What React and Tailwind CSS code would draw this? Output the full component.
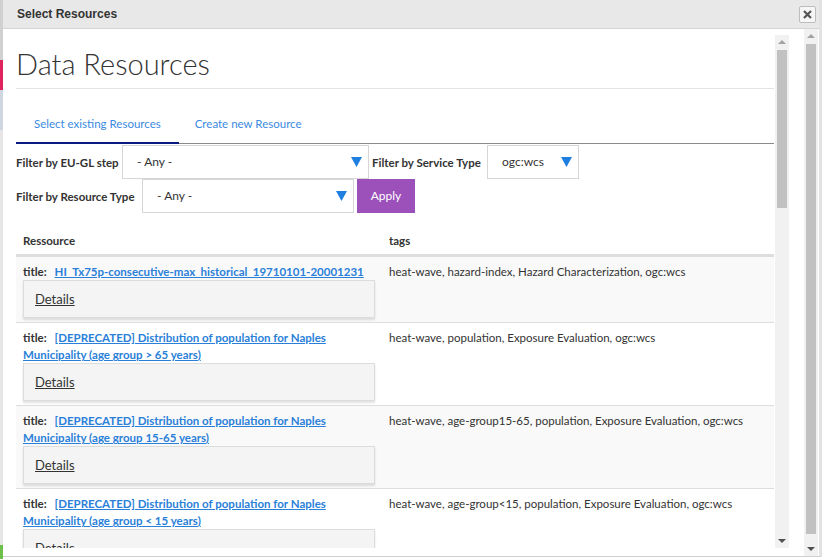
import React from "react";

const rows = [
  {
    title: "HI_Tx75p-consecutive-max_historical_19710101-20001231",
    tags: "heat-wave, hazard-index, Hazard Characterization, ogc:wcs",
    stripe: true,
  },
  {
    title: "[DEPRECATED] Distribution of population for Naples Municipality (age group > 65 years)",
    tags: "heat-wave, population, Exposure Evaluation, ogc:wcs",
    stripe: false,
  },
  {
    title: "[DEPRECATED] Distribution of population for Naples Municipality (age group 15-65 years)",
    tags: "heat-wave, age-group15-65, population, Exposure Evaluation, ogc:wcs",
    stripe: true,
  },
  {
    title: "[DEPRECATED] Distribution of population for Naples Municipality (age group < 15 years)",
    tags: "heat-wave, age-group<15, population, Exposure Evaluation, ogc:wcs",
    stripe: false,
  },
];

const Caret = () => (
  <svg width="11" height="10" viewBox="0 0 11 10" className="shrink-0">
    <path d="M0 0 H11 L5.5 10 Z" fill="#1f7fe0" />
  </svg>
);

const Select = ({ value, width }) => (
  <div
    className={`flex h-[34px] items-center justify-between border border-[#d6d6d6] bg-white pl-[14px] pr-[6px] text-[12px] font-normal text-[#333] ${width}`}
  >
    <span>{value}</span>
    <Caret />
  </div>
);

// fake scrollbar, the picture shows two of them
const ScrollBar = ({ thumbTop, thumbHeight, className }) => (
  <div className={`relative flex w-[14px] flex-col bg-[#f1f1f1] ${className}`}>
    <div className="flex h-[14px] items-center justify-center">
      <div className="h-0 w-0 border-x-[4px] border-b-[4px] border-x-transparent border-b-[#a3a3a3]" />
    </div>
    <div
      className="absolute left-[2px] right-[2px] bg-[#c1c1c1]"
      style={{ top: thumbTop, height: thumbHeight }}
    />
    <div className="flex-1" />
    <div className="flex h-[14px] items-center justify-center">
      <div className="h-0 w-0 border-x-[4px] border-t-[4px] border-x-transparent border-t-[#505050]" />
    </div>
  </div>
);

const ResourceRow = ({ row }) => (
  <div
    className={`flex border-t border-[#dddddd] ${row.stripe ? "bg-[#f9f9f9]" : "bg-white"}`}
  >
    <div className="w-[366px] shrink-0 px-[7px] pb-[4px] pt-[6px]">
      <div className="text-[11.5px] leading-[17px] text-[#333]">
        <span className="font-bold">title:</span>{" "}
        <a href="#" className="ml-[5px] font-bold text-[#2a7fd9] underline">
          {row.title}
        </a>
      </div>
      <div className="flex h-[38px] items-center border border-[#dcdcdc] bg-[#f4f4f4] px-[11px] shadow-[0_2px_2px_rgba(0,0,0,0.12)]">
        <span className="text-[13px] text-[#333] underline">Details</span>
      </div>
    </div>
    <div className="flex-1 px-[7px] pt-[6px] text-[11.5px] leading-[17px] text-[#333]">
      {row.tags}
    </div>
  </div>
);

export default function App() {
  return (
    <div className="flex h-[559px] w-[822px] overflow-hidden bg-white font-['Lato',sans-serif]">
      {/* page behind the dialog */}
      <div className="flex w-[3px] shrink-0 flex-col bg-[#e6e6e6]">
        <div className="h-[60px] bg-[#d0d0d0]" />
        <div className="h-[30px] bg-[#e0245e]" />
        <div className="h-[40px] bg-[#d0d6e0]" />
        <div className="flex-1" />
        <div className="h-[14px] bg-[#6cc04a]" />
      </div>

      <div className="flex h-[557px] flex-1 flex-col border-r-[3px] border-b border-[#cfcfcf] border-r-[#e2e2e2]">
        {/* title bar */}
        <div className="flex h-[29px] shrink-0 items-center justify-between border-b border-[#d4d4d4] bg-[#e8e8e8] pl-[14px] pr-[3px]">
          <span className="font-['Liberation_Sans',Arial,sans-serif] text-[12px] font-bold text-[#333]">
            Select Resources
          </span>
          <button className="flex h-[17px] w-[17px] items-center justify-center rounded-[2px] border border-[#bdbdbd] bg-[#f6f6f6]">
            <svg width="9" height="9" viewBox="0 0 9 9">
              <path d="M1 1 L8 8 M8 1 L1 8" stroke="#555" strokeWidth="2.2" />
            </svg>
          </button>
        </div>

        {/* body */}
        <div className="flex flex-1">
          <div className="flex flex-1 pl-[13px] pt-[6px]">
            <div className="flex h-[513px] w-[773px]">
              <div className="w-[759px] overflow-hidden">
                <h1 className="mt-[11px] text-[29px] font-light leading-[36px] text-[#333]">
                  Data Resources
                </h1>
                <div className="mt-[6px] h-px bg-[#e3e3e3]" />

                {/* tabs */}
                <div className="mt-[26px] flex border-b border-[#8a8a8a]">
                  <div className="-mb-px border-b-2 border-[#0a1a80] px-[18px] pb-[10px] text-[11.5px] text-[#3b8ae0]">
                    Select existing Resources
                  </div>
                  <div className="px-[16px] pb-[10px] text-[11.5px] text-[#3b8ae0]">
                    Create new Resource
                  </div>
                </div>

                {/* filters */}
                <div className="mt-px flex items-center text-[11.5px] font-bold text-[#333]">
                  <span className="w-[106px]">Filter by EU-GL step</span>
                  <Select value="- Any -" width="w-[247px]" />
                  <span className="w-[118px] pl-[3px]">Filter by Service Type</span>
                  <Select value="ogc:wcs" width="w-[92px]" />
                </div>
                <div className="flex items-center text-[11.5px] font-bold text-[#333]">
                  <span className="w-[126px]">Filter by Resource Type</span>
                  <Select value="- Any -" width="w-[212px]" />
                  <button className="ml-[3px] h-[34px] w-[58px] bg-[#9b50ba] text-[12px] font-normal text-white">
                    Apply
                  </button>
                </div>

                {/* table */}
                <div className="mt-[14px]">
                  <div className="flex border-b-2 border-[#dddddd] text-[11.5px] font-bold leading-[17px] text-[#333]">
                    <div className="w-[366px] px-[7px] pb-[5px] pt-[5px]">Ressource</div>
                    <div className="flex-1 px-[7px] pb-[5px] pt-[5px]">tags</div>
                  </div>
                  {rows.map((row, i) => (
                    <ResourceRow key={i} row={row} />
                  ))}
                </div>
              </div>
              <ScrollBar className="ml-[1px]" thumbTop={15} thumbHeight={158} />
            </div>
          </div>
          <ScrollBar className="mr-[1px]" thumbTop={15} thumbHeight={490} />
        </div>
      </div>
    </div>
  );
}
